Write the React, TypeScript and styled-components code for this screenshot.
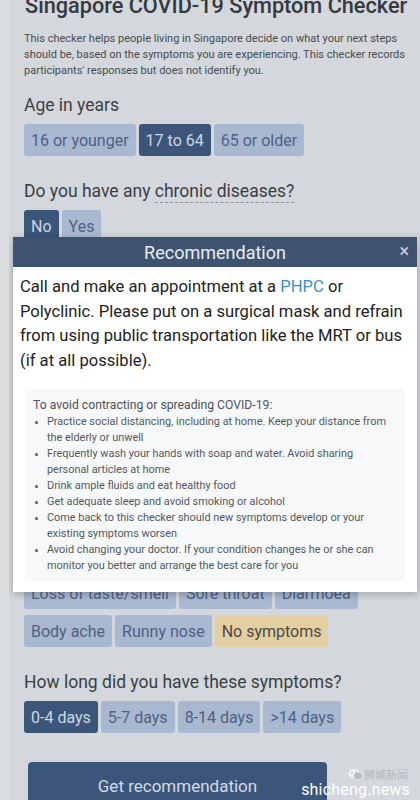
import React from "react";
import styled, { createGlobalStyle } from "styled-components";

type Tone = "off" | "on" | "none";

const GlobalStyle = createGlobalStyle`
  html, body {
    margin: 0;
    padding: 0;
    background: #d4d7db;
  }
  body {
    font-family: Roboto, "Liberation Sans", Arial, sans-serif;
  }
`;

const ages = ["16 or younger", "17 to 64", "65 or older"];
const durations = ["0-4 days", "5-7 days", "8-14 days", ">14 days"];
const tips = [
  "Practice social distancing, including at home. Keep your distance from the elderly or unwell",
  "Frequently wash your hands with soap and water. Avoid sharing personal articles at home",
  "Drink ample fluids and eat healthy food",
  "Get adequate sleep and avoid smoking or alcohol",
  "Come back to this checker should new symptoms develop or your existing symptoms worsen",
  "Avoid changing your doctor. If your condition changes he or she can monitor you better and arrange the best care for you",
];

const App: React.FC = () => {
  return (
    <Page>
      <GlobalStyle />
      <Content>
        <Title>Singapore COVID-19 Symptom Checker</Title>
        <Intro>
          This checker helps people living in Singapore decide on what your next steps
          should be, based on the symptoms you are experiencing. This checker records
          participants' responses but does not identify you.
        </Intro>

        <Question $top={15}>
          <Label>Age in years</Label>
          <Choices>
            {ages.map((a) => (
              <Choice key={a} $tone={a === "17 to 64" ? "on" : "off"}>
                {a}
              </Choice>
            ))}
          </Choices>
        </Question>

        <Question>
          <Label>
            Do you have any <Dotted>chronic diseases?</Dotted>
          </Label>
          <Choices>
            <Choice $tone="on">No</Choice>
            <Choice $tone="off">Yes</Choice>
          </Choices>
        </Question>

        {/* the rest of the questions sit under the modal; only the last symptom rows peek out */}
        <Rows $top={335}>
          <Choices>
            <Choice $tone="off">Loss of taste/smell</Choice>
            <Choice $tone="off">Sore throat</Choice>
            <Choice $tone="off">Diarrhoea</Choice>
          </Choices>
          <Choices>
            <Choice $tone="off">Body ache</Choice>
            <Choice $tone="off">Runny nose</Choice>
            <Choice $tone="none">No symptoms</Choice>
          </Choices>
        </Rows>

        <Question>
          <Label>How long did you have these symptoms?</Label>
          <Choices>
            {durations.map((d) => (
              <Choice key={d} $tone={d === "0-4 days" ? "on" : "off"}>
                {d}
              </Choice>
            ))}
          </Choices>
        </Question>

        <SubmitBtn>Get recommendation</SubmitBtn>
      </Content>

      <Modal>
        <ModalHeader>
          <ModalTitle>Recommendation</ModalTitle>
          <CloseBtn>×</CloseBtn>
        </ModalHeader>
        <ModalBody>
          <Advice>
            Call and make an appointment at a <Link>PHPC</Link> or Polyclinic. Please put on
            a surgical mask and refrain from using public transportation like the MRT or bus
            (if at all possible).
          </Advice>
          <TipsBox>
            <TipsTitle>To avoid contracting or spreading COVID-19:</TipsTitle>
            <TipsList>
              {tips.map((t) => (
                <li key={t}>{t}</li>
              ))}
            </TipsList>
          </TipsBox>
        </ModalBody>
      </Modal>

      <Watermark>
        <WmTop>
          <svg width="15" height="13" viewBox="0 0 15 13">
            <ellipse cx="6" cy="5.5" rx="5.6" ry="4.8" fill="#eef0f2" />
            <ellipse cx="10" cy="8" rx="4.6" ry="3.9" fill="#b9bdc2" stroke="#eef0f2" strokeWidth="0.8" />
            <circle cx="4" cy="4.5" r="0.8" fill="#a9adb2" />
            <circle cx="8" cy="4.5" r="0.8" fill="#a9adb2" />
          </svg>
          <WmCn>狮城新闻</WmCn>
        </WmTop>
        <WmEn>shicheng.news</WmEn>
      </Watermark>
    </Page>
  );
};

const Page = styled.div`
  position: relative;
  width: 420px;
  height: 800px;
  overflow: hidden;
  background: #d4d7db;
  border-left: 9px solid #dcdddf;
  box-sizing: border-box;
`;

const Content = styled.div`
  display: flex;
  flex-direction: column;
  padding: 0 0 0 15px;
  width: 385px;
  margin-top: -7px;
`;

const Title = styled.h1`
  margin: 0 0 0 1px;
  font-size: 21.7px;
  line-height: 26px;
  font-weight: 500;
  color: #33393f;
  white-space: nowrap;
`;

const Intro = styled.p`
  margin: 12px 0 0;
  font-size: 11px;
  line-height: 16px;
  color: #474c52;
`;

const Question = styled.section<{ $top?: number }>`
  display: flex;
  flex-direction: column;
  gap: 8px;
  margin-top: ${(p) => p.$top ?? 24}px;
`;

const Label = styled.div`
  font-size: 17.5px;
  line-height: 22px;
  color: #3a3f45;
`;

const Dotted = styled.span`
  border-bottom: 1px dashed #8a9099;
  padding-bottom: 1px;
`;

const Rows = styled.div<{ $top?: number }>`
  display: flex;
  flex-direction: column;
  gap: 6px;
  margin-top: ${(p) => p.$top ?? 0}px;
`;

const Choices = styled.div`
  display: flex;
  gap: 3px;
`;

const toneBg: Record<Tone, string> = {
  off: "#a9b8d1",
  on: "#3b5679",
  none: "#e4cfa3",
};
const toneFg: Record<Tone, string> = {
  off: "#4e6182",
  on: "#cdd6e3",
  none: "#4b4a45",
};

const Choice = styled.button<{ $tone: Tone }>`
  height: 32px;
  padding: 0 7px;
  border: none;
  border-radius: 3px;
  font-family: inherit;
  font-size: 16px;
  background: ${(p) => toneBg[p.$tone]};
  color: ${(p) => toneFg[p.$tone]};
`;

const SubmitBtn = styled.button`
  margin: 29px 0 0 4px;
  width: 299px;
  height: 46px;
  border: none;
  border-radius: 4px;
  background: #3b5679;
  color: #d3dbe6;
  font-family: inherit;
  font-size: 17px;
  padding-top: 2px;
`;

const Modal = styled.div`
  position: absolute;
  top: 237px;
  left: 4px;
  width: 404px;
  background: #fff;
  box-shadow: 0 2px 8px rgba(0, 0, 0, 0.25);
`;

const ModalHeader = styled.div`
  position: relative;
  height: 30px;
  background: #3e536f;
  display: flex;
  align-items: center;
  justify-content: center;
`;

const ModalTitle = styled.div`
  font-size: 18px;
  color: #e9edf2;
`;

const CloseBtn = styled.span`
  position: absolute;
  right: 8px;
  top: 5px;
  font-size: 18px;
  line-height: 18px;
  color: #c6cfdb;
`;

const ModalBody = styled.div`
  padding: 8px 12px 11px;
`;

const Advice = styled.p`
  margin: 0 0 0 -5px;
  font-size: 16.6px;
  line-height: 24.5px;
  color: #222;
`;

const Link = styled.span`
  color: #3a8ed0;
`;

const TipsBox = styled.div`
  margin-top: 16px;
  background: #f6f8fa;
  padding: 8px 8px 7px;
`;

const TipsTitle = styled.div`
  font-size: 12.2px;
  line-height: 16px;
  color: #4e5359;
`;

const TipsList = styled.ul`
  margin: 1px 0 0;
  padding-left: 14px;
  font-size: 10.9px;
  line-height: 16px;
  color: #53585e;

  li::marker {
    font-size: 9px;
  }
`;

const Watermark = styled.div`
  position: absolute;
  right: 10px;
  bottom: 2px;
  display: flex;
  flex-direction: column;
  align-items: flex-end;
`;

const WmTop = styled.div`
  display: flex;
  align-items: center;
  gap: 1px;
  height: 13px;
  margin-right: 2px;
`;

const WmCn = styled.span`
  font-family: "Noto Sans CJK SC", sans-serif;
  font-size: 11px;
  line-height: 13px;
  color: #b4b8bd;
`;

const WmEn = styled.span`
  font-size: 16px;
  line-height: 17px;
  color: #ffffff;
  letter-spacing: 0.2px;
`;

export default App;
